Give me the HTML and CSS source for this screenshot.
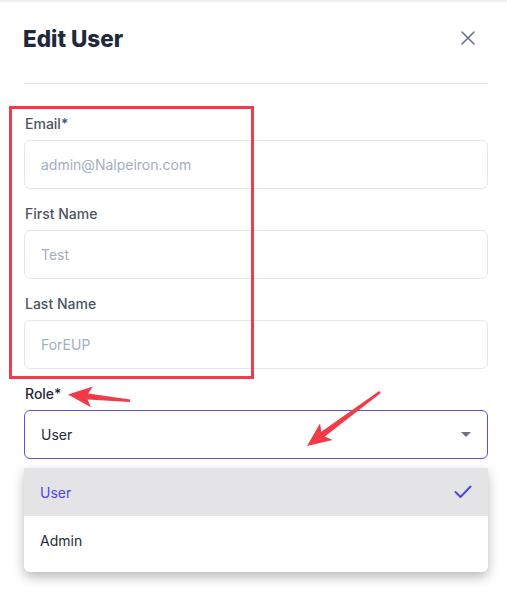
FILE: index.html
```html
<!DOCTYPE html>
<html lang="en">
<head>
<meta charset="utf-8">
<title>Edit User</title>
<link rel="stylesheet" href="styles.css">
</head>
<body>
<div class="modal">
  <div class="header">
    <h1 class="title">Edit User</h1>
    <button class="close" aria-label="Close">
      <svg width="14" height="14" viewBox="0 0 14 14"><path d="M1 1L13 13M13 1L1 13" stroke="#64748b" stroke-width="1.6" stroke-linecap="round"/></svg>
    </button>
  </div>
  <hr class="divider">
  <form class="form">
    <div class="field">
      <label class="label">Email*</label>
      <div class="input placeholder">admin@Nalpeiron.com</div>
    </div>
    <div class="field">
      <label class="label">First Name</label>
      <div class="input placeholder">Test</div>
    </div>
    <div class="field">
      <label class="label">Last Name</label>
      <div class="input placeholder">ForEUP</div>
    </div>
    <div class="field">
      <label class="label strong">Role*</label>
      <div class="input select">
        <span>User</span>
        <svg class="caret" width="10" height="5" viewBox="0 0 10 5"><path d="M0 0H10L5 5Z" fill="#6b7280"/></svg>
      </div>
    </div>
    <ul class="menu">
      <li class="option selected"><span>User</span>
        <svg width="18" height="14" viewBox="0 0 18 14"><path d="M1.5 7L6.5 12L16.5 1.5" fill="none" stroke="#5046e5" stroke-width="2" stroke-linecap="round" stroke-linejoin="round"/></svg>
      </li>
      <li class="option">Admin</li>
    </ul>
  </form>
</div>
<div class="highlight"></div>
<svg class="arrows" width="507" height="592" viewBox="0 0 507 592">
  <polygon fill="#f23a48" points="68,394.5 92.9,386.4 88.2,393.5 130.1,399.5 129.9,401.9 87.6,399.5 90.9,407.3"/>
  <polygon fill="#f23a48" points="307,446 320.1,423.3 321.3,431.7 379.2,391 380.8,393 324.9,436.5 332.5,440.1"/>
</svg>
</body>
</html>
```

FILE: styles.css
```css
* { box-sizing: border-box; }
html, body { margin: 0; padding: 0; background: #fff; }
body {
  font-family: Inter, "Noto Sans", sans-serif;
  width: 507px;
  height: 592px;
  overflow: hidden;
  position: relative;
}
.modal {
  border-top: 2px solid #f0f0f1;
  padding: 20px 19px 0 24px;
}
.header {
  display: flex;
  justify-content: space-between;
  align-items: center;
  height: 32px;
}
.title {
  margin: 1px 0 0 -1px;
  font-size: 22.5px;
  line-height: 32px;
  font-weight: 800;
  color: #1e293b;
  letter-spacing: 0;
}
.close {
  border: 0;
  background: none;
  padding: 0;
  margin-right: 13px;
  width: 14px;
  height: 14px;
  display: flex;
}
.divider {
  border: 0;
  border-top: 1px solid #e0e0e0;
  margin: 29px 0 0 0;
  height: 0;
}
.form {
  margin: 0;
  padding-top: 30px;
}
.field {
  display: flex;
  flex-direction: column;
  margin-bottom: 15px;
}
.label {
  font-size: 14px;
  line-height: 20px;
  font-weight: 500;
  color: #4b5563;
  margin-bottom: 6px;
  padding-left: 1px;
}
.label.strong { color: #1f2937; }
.input {
  height: 49px;
  border: 1px solid #e2e8f0;
  border-radius: 6px;
  padding: 0 16px;
  display: flex;
  align-items: center;
  font-size: 14px;
  color: #1f2937;
}
.placeholder { color: #a3aec0; }
.select {
  border-color: #5a50e6;
  justify-content: space-between;
  padding-right: 16px;
}
.caret { margin-right: 0; }
.menu {
  list-style: none;
  margin: -6px 0 0 0;
  padding: 0 0 8px 0;
  background: #fff;
  border-radius: 0 0 6px 6px;
  box-shadow: 0 5px 12px rgba(0,0,0,0.28);
}
.option {
  height: 48px;
  display: flex;
  align-items: center;
  justify-content: space-between;
  padding: 0 16px 0 16px;
  font-size: 14px;
  color: #1f2937;
}
.option.selected {
  background: #e4e4e7;
  color: #5046e5;
}
.highlight {
  position: absolute;
  left: 9px;
  top: 106px;
  width: 245px;
  height: 273px;
  border: 3px solid #f23a48;
}
.arrows {
  position: absolute;
  left: 0;
  top: 0;
  pointer-events: none;
}
```
